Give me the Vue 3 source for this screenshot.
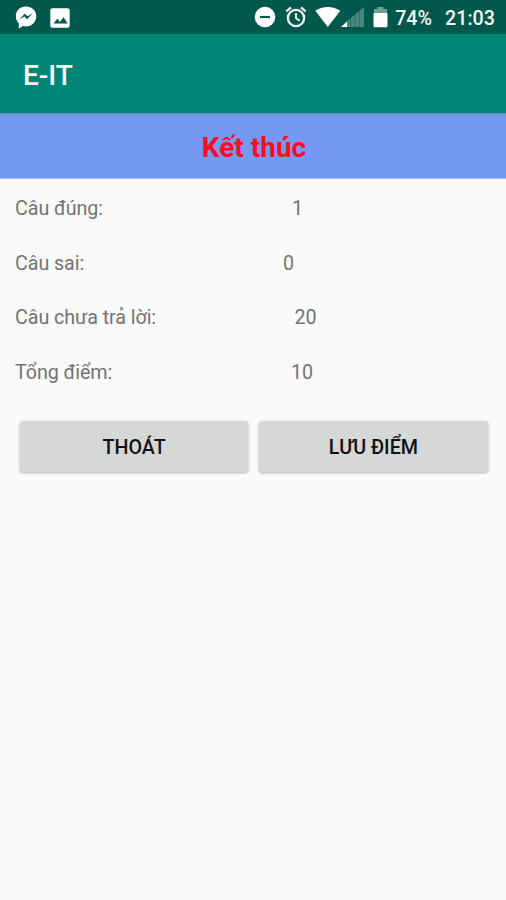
<script setup>
const results = [
  { label: 'Câu đúng:', value: '1', indent: 10 },
  { label: 'Câu sai:', value: '0', indent: 1 },
  { label: 'Câu chưa trả lời:', value: '20', indent: 12.500 },
  { label: 'Tổng điểm:', value: '10', indent: 9 }
]
</script>

<template>
  <div class="screen">
    <div class="status">
      <div class="notifications">
        <svg width="22" height="24" viewBox="0 0 22 24">
          <path fill="#fff" d="M11 .5C5.200.5.8 4.700.8 10c0 3.200 1.400 5.700 3 7.300V22.500L8 20c1 .3 2 .4 3 .4 5.800 0 10.300-4.400 10.300-10.200S16.800.5 11 .5z" />
          <path fill="#00574b" d="M4.400 13.300l5.300-5.600 2.900 2.600 4.800-2.800-5.200 5.700-2.800-2.700z" />
        </svg>
        <svg width="20" height="20" viewBox="0 0 20 20">
          <rect x=".3" y=".3" width="19.400" height="19.400" rx="2.200" fill="#fff" />
          <path fill="#00574b" d="M3.500 15.600l3.800-4.800 2.600 3.100 3.600-4.600 4.200 6.300z" />
        </svg>
      </div>
      <div class="system">
        <svg class="dnd" width="22" height="22" viewBox="0 0 22 22">
          <circle cx="11" cy="11" r="10.300" fill="#fff" />
          <path stroke="#00574b" stroke-width="2.200" d="M6 11h10" />
        </svg>
        <svg class="alarm" width="22" height="22" viewBox="0 0 22 22" fill="none" stroke="#e9f2f0">
          <circle cx="11" cy="12" r="8.100" stroke-width="2.400" />
          <path stroke-width="2.300" d="M1.300 5.400l4.700-4M20.700 5.400l-4.700-4" />
          <path stroke-width="1.900" d="M11 7v5.300l3.700 2.300" />
        </svg>
        <svg class="signal" width="50" height="22" viewBox="0 0 50 22">
          <path fill="#fff" d="M.3 4.800C7.300-.4 18.300-.4 25.300 4.800L12.800 21z" />
          <path fill="#49877d" d="M31 16L49 1v20H31z" />
          <path fill="#fff" d="M26 21l6-5.500V21z" />
          <path stroke="#00574b" stroke-width=".8" opacity=".6" d="M35.500 10v11M40 6v15M44.500 3v18" />
        </svg>
        <svg class="battery" width="15" height="21" viewBox="0 0 15 21">
          <path fill="#6ea198" d="M4.500 0h6v2H14v5H1V2h3.500z" />
          <path fill="#fff" d="M.5 6h14v13q0 1.200-1.200 1.200H1.700Q.5 20.200.5 19z" />
        </svg>
        <span class="percent">74%</span>
        <span class="clock">21:03</span>
      </div>
    </div>
    <header class="toolbar">E-IT</header>
    <h1 class="heading">Kết thúc</h1>
    <main class="results">
      <div v-for="row in results" :key="row.label" class="row">
        <span class="label">{{ row.label }}</span>
        <span :style="{ paddingLeft: row.indent + 'px' }">{{ row.value }}</span>
      </div>
    </main>
    <div class="actions">
      <button>THOÁT</button>
      <button>LƯU ĐIỂM</button>
    </div>
  </div>
</template>

<style>
body { background: #fafafa; }
</style>

<style scoped>
.screen {
  width: 506px;
  height: 900px;
  overflow: hidden;
  background: #fafafa;
  font-family: Roboto, sans-serif;
}
.status {
  box-sizing: border-box;
  height: 34px;
  padding: 0 11px 0 15px;
  display: flex;
  justify-content: space-between;
  align-items: center;
  background: #00574b;
  color: #f2f7f6;
}
.status svg { display: block; flex: none; }
.notifications, .system { display: flex; align-items: center; }
.notifications { gap: 12.500px; padding-top: 1px; }
.system { height: 34px; font-size: 19.7px; font-weight: 500; }
.alarm { margin-left: 9px; }
.signal { margin-left: 8px; }
.battery { margin-left: 8px; }
.percent { margin-left: 7px; padding-top: 2px; }
.clock { margin-left: 13px; padding-top: 2px; }
.toolbar {
  box-sizing: border-box;
  height: 79px;
  padding: 3px 0 0 23px;
  display: flex;
  align-items: center;
  background: #008577;
  color: #f4f9f8;
  font-size: 28px;
  font-weight: 500;
}
.heading {
  margin: 0;
  height: 66px;
  display: flex;
  align-items: center;
  justify-content: center;
  padding: 2px 0 0 2px;
  box-sizing: border-box;
  background: linear-gradient(#6d88d2, #7599f2 5px, #7599f2 65px, #a6bcf4 65px);
  color: #fc0d1b;
  font-size: 28px;
  font-weight: 700;
}
.results { padding: 2px 15px 0; }
.row {
  height: 54.8px;
  display: grid;
  grid-template-columns: 267px 1fr;
  align-items: center;
  color: #737373;
  font-size: 19.7px;
}
.label { letter-spacing: -.06px; }
.actions {
  display: flex;
  gap: 11px;
  padding: 21px 18.500px 0 20px;
}
button {
  flex: 1;
  height: 51px;
  padding: 1px 0 0;
  border: 0;
  border-radius: 3px;
  background: #d6d7d7;
  box-shadow: 0 1px 3px rgba(0, 0, 0, .3);
  color: #111;
  font-family: inherit;
  font-size: 19.7px;
  font-weight: 500;
}
</style>
